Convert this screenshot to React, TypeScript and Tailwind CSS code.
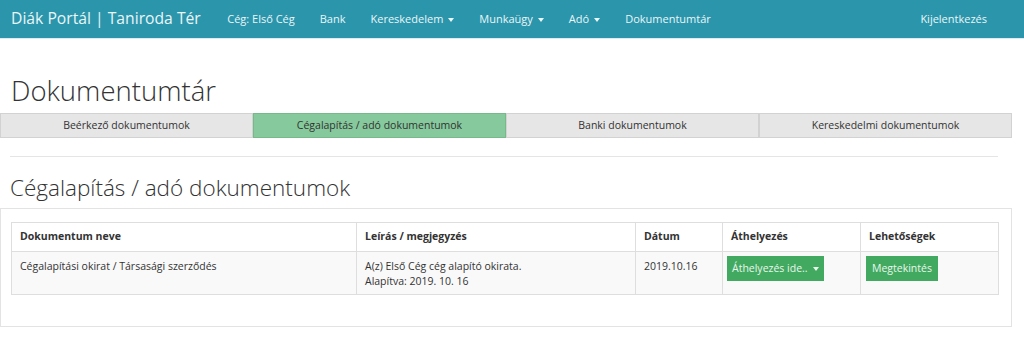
const navItems = [
  { label: "Cég: Első Cég", caret: false },
  { label: "Bank", caret: false },
  { label: "Kereskedelem", caret: true },
  { label: "Munkaügy", caret: true },
  { label: "Adó", caret: true },
  { label: "Dokumentumtár", caret: false },
];

const tabs = [
  { label: "Beérkező dokumentumok", active: false },
  { label: "Cégalapítás / adó dokumentumok", active: true },
  { label: "Banki dokumentumok", active: false },
  { label: "Kereskedelmi dokumentumok", active: false },
];

function Caret() {
  return <span className="inline-block ml-[5px] align-middle border-t-[4px] border-x-[3.5px] border-x-transparent border-t-current" />;
}

export default function App() {
  return (
    <div className="w-[1024px] h-[339px] overflow-hidden bg-white text-[#333]" style={{ fontFamily: '"Open Sans", sans-serif' }}>
      <nav className="h-[39px] bg-[#2a95ab] border-b border-[#d9eef2] flex items-center text-white">
        <div className="pl-[11px] pr-[14px] text-[15.7px] text-[#eaf6f8]">Diák Portál | Taniroda Tér</div>
        <ul className="flex items-center text-[11px] text-[#eaf6f8]">
          {navItems.map((n) => (
            <li key={n.label} className="px-[12.5px]">
              {n.label}
              {n.caret && <Caret />}
            </li>
          ))}
        </ul>
        <div className="ml-auto mr-[37px] text-[11px] text-[#eaf6f8]">Kijelentkezés</div>
      </nav>

      <h1 className="mt-[35px] ml-[11px] text-[27.5px] leading-[34px] font-light">Dokumentumtár</h1>

      <div className="mt-[5px] w-[1012px] grid grid-cols-4 text-[10.5px]">
        {tabs.map((t) => (
          <div
            key={t.label}
            className={
              "h-[25px] flex items-center justify-center border " +
              (t.active ? "bg-[#86c99c] border-[#78b98c]" : "bg-[#e6e6e6] border-[#d2d2d2]")
            }
          >
            {t.label}
          </div>
        ))}
      </div>

      <hr className="mt-[18px] ml-[10px] w-[988px] border-[#e5e5e5]" />

      <h2 className="mt-[16px] ml-[10px] text-[22.5px] leading-[30px] font-light">Cégalapítás / adó dokumentumok</h2>

      <div className="mt-[5px] w-[1012px] h-[119px] border border-[#e3e3e3] pt-[13px] pl-[10px]">
        <table className="w-[988px] border-collapse text-[10.5px]">
          <thead>
            <tr className="h-[29px]">
              <th className="w-[345px] border border-[#dedede] text-left font-bold pl-[8px]">Dokumentum neve</th>
              <th className="w-[279px] border border-[#dedede] text-left font-bold pl-[8px]">Leírás / megjegyzés</th>
              <th className="w-[87px] border border-[#dedede] text-left font-bold pl-[8px]">Dátum</th>
              <th className="w-[138px] border border-[#dedede] text-left font-bold pl-[8px]">Áthelyezés</th>
              <th className="border border-[#dedede] text-left font-bold pl-[8px]">Lehetőségek</th>
            </tr>
          </thead>
          <tbody>
            <tr className="h-[43px] bg-[#f9f9f9] align-top">
              <td className="border border-[#dedede] pl-[8px] pt-[7px]">Cégalapítási okirat / Társasági szerződés</td>
              <td className="border border-[#dedede] pl-[8px] pt-[7px] leading-[15px]">
                A(z) Első Cég cég alapító okirata.
                <br />
                Alapítva: 2019. 10. 16
              </td>
              <td className="border border-[#dedede] pl-[8px] pt-[7px]">2019.10.16</td>
              <td className="border border-[#dedede] pl-[4px] pt-[4px]">
                <button className="h-[25px] px-[5px] bg-[#41a960] text-[#e9f7ec] text-[10.5px] flex items-center">
                  Áthelyezés ide..
                  <Caret />
                </button>
              </td>
              <td className="border border-[#dedede] pl-[5px] pt-[4px]">
                <button className="h-[25px] px-[6px] bg-[#41a960] text-[#e9f7ec] text-[10.5px]">Megtekintés</button>
              </td>
            </tr>
          </tbody>
        </table>
      </div>
    </div>
  );
}
